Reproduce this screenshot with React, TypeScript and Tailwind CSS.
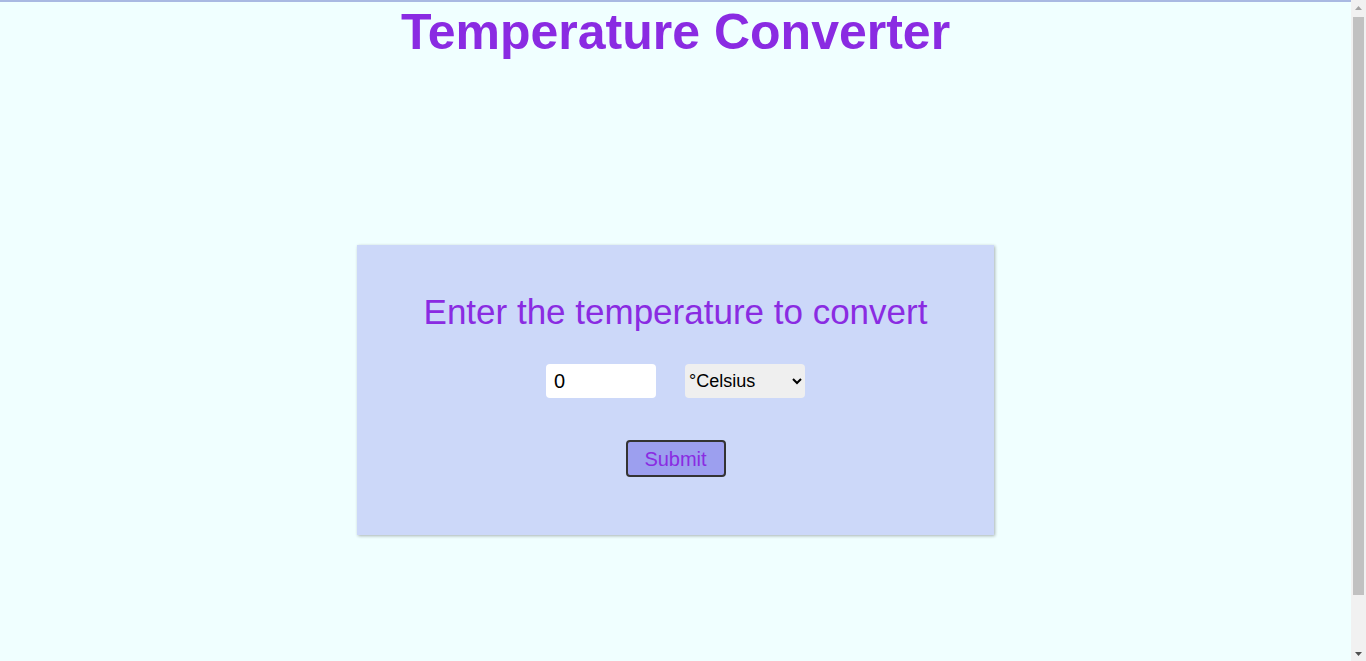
import { useState } from 'react';

export default function App() {
  const [value, setValue] = useState('0');
  const [unit, setUnit] = useState('celsius');

  return (
    <div className="h-screen flex overflow-hidden bg-[#f0ffff] font-['Liberation_Sans',Arial,sans-serif]">
      <main className="flex-1 border-t-2 border-[#a9b9e2]">
        <h1 className="mt-[2px] text-center text-[50px] leading-[57px] font-bold text-[#8a2be2]">Temperature Converter</h1>

        <div className="mx-auto mt-[184px] w-[637px] bg-[#ccd8f9] shadow-[1px_1px_3px_rgba(0,0,0,0.3)] pt-[47px] pb-[58px] flex flex-col items-center">
          <h2 className="text-[35px] leading-[40px] text-[#8a2be2]">Enter the temperature to convert</h2>

          <div className="mt-[32px] flex gap-[29px]">
            <input
              type="text"
              value={value}
              onChange={(e) => setValue(e.target.value)}
              className="w-[110px] h-[34px] bg-white rounded-[4px] pl-[8px] text-[20px] text-black outline-none"
            />
            <select
              value={unit}
              onChange={(e) => setUnit(e.target.value)}
              className="w-[120px] h-[34px] bg-[#efefef] rounded-[4px] pl-0 text-[18px] text-black outline-none"
            >
              <option value="celsius">°Celsius</option>
              <option value="fahrenheit">°Fahrenheit</option>
              <option value="kelvin">Kelvin</option>
            </select>
          </div>

          <button className="mt-[42px] w-[100px] h-[37px] bg-[#9c9fef] border-2 border-[#333] rounded-[4px] text-[20px] text-[#8a2be2]">
            Submit
          </button>
        </div>
      </main>

      {/* page scrollbar as it appears in the capture */}
      <aside className="w-[15px] bg-[#f1f1f1] flex flex-col">
        <div className="h-[15px] flex items-center justify-center">
          <svg width="7" height="4" viewBox="0 0 7 4"><path d="M3.5 0L7 4H0z" fill="#a3a3a3" /></svg>
        </div>
        <div className="flex-1 px-[2px] pt-[2px]">
          <div className="h-[578px] bg-[#c1c1c1]" />
        </div>
        <div className="h-[15px] flex items-center justify-center">
          <svg width="7" height="4" viewBox="0 0 7 4"><path d="M0 0H7L3.5 4z" fill="#505050" /></svg>
        </div>
      </aside>
    </div>
  );
}
